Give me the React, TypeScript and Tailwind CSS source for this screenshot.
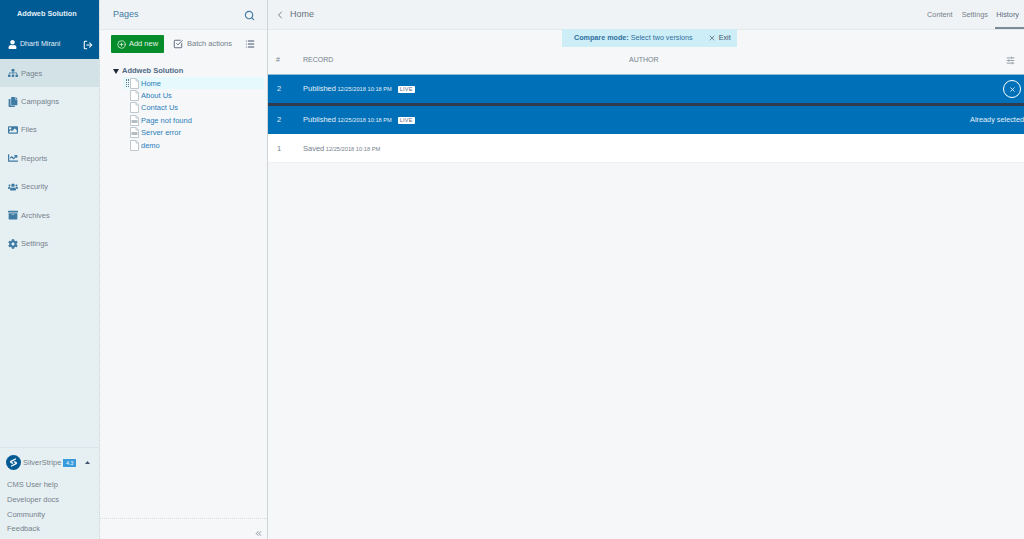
import { ChevronLeft, ChevronsLeft, CirclePlus, List, LogOut, Search, SlidersHorizontal, SquareCheckBig, X } from 'lucide-react';
import { FaArchive, FaChartLine, FaCog, FaCopy, FaImage, FaSitemap, FaUser, FaUsers } from 'react-icons/fa';

const NAV = [
  { label: 'Pages', icon: FaSitemap, active: true },
  { label: 'Campaigns', icon: FaCopy },
  { label: 'Files', icon: FaImage },
  { label: 'Reports', icon: FaChartLine },
  { label: 'Security', icon: FaUsers },
  { label: 'Archives', icon: FaArchive },
  { label: 'Settings', icon: FaCog },
];

const HELP = ['CMS User help', 'Developer docs', 'Community', 'Feedback'];

const TREE = [
  { label: 'Home', error: false, current: true },
  { label: 'About Us', error: false },
  { label: 'Contact Us', error: false },
  { label: 'Page not found', error: true },
  { label: 'Server error', error: true },
  { label: 'demo', error: false },
];

function DocIcon({ error }: { error?: boolean }) {
  return (
    <svg width="9" height="11" viewBox="0 0 9 11" className="shrink-0">
      <path d="M.5.5h5.5l2.5 2.5v7.5h-8z" fill="#fff" stroke="#c0c8cd" />
      <path d="M6 .5v2.5h2.5" fill="none" stroke="#c0c8cd" />
      {error && <rect x="1.5" y="5" width="6" height="3" fill="#b4bdc3" />}
    </svg>
  );
}

function LiveBadge() {
  return (
    <span className="ml-[6px] rounded-[1px] bg-white px-[2px] text-[5.5px] leading-[7px] tracking-[0.2px] text-[#5b6b82]">
      LIVE
    </span>
  );
}

function SelectedRow({ right }: { right: React.ReactNode }) {
  return (
    <div className="flex h-[28px] items-center bg-[#0071b8] text-[#e3eff7]">
      <span className="w-[35px] pl-[9px] text-[7.5px]">2</span>
      <span className="text-[7.5px]">Published</span>
      <span className="ml-[1.5px] text-[5.7px]">12/25/2018 10:18 PM</span>
      <LiveBadge />
      <div className="ml-auto flex items-center">{right}</div>
    </div>
  );
}

export default function App() {
  return (
    <div className="flex h-[539px] w-[1024px] overflow-hidden bg-[#f5f7f9] font-['Liberation_Sans',Arial,sans-serif] text-[#43536d]">
      {/* Menu */}
      <aside className="flex w-[100px] shrink-0 flex-col border-r border-dotted border-[#ced5d7] bg-[#e6f0f3]">
        <div className="h-[59px] bg-[#005b94] text-[#e3eff7]">
          <div className="flex h-[28px] items-center pl-[17px] text-[7.3px] font-bold">Addweb Solution</div>
          <div className="flex h-[31px] items-center pl-[8px] pr-[6px] pt-[2px]">
            <FaUser size={9} className="text-white" />
            <span className="ml-[3px] text-[7.1px]">Dharti Mirani</span>
            <LogOut size={10} strokeWidth={2.5} className="ml-auto text-white" />
          </div>
        </div>
        <nav>
          {NAV.map(({ label, icon: Icon, active }) => (
            <div key={label} className={`flex h-[28.4px] items-center pl-[7px] ${active ? 'bg-[#d3e2e7]' : ''}`}>
              <span className="flex w-[14px] justify-center pr-[2px] text-[#3f7ba3]">
                <Icon size={10} />
              </span>
              <span className="text-[7.5px] text-[#76828c]">{label}</span>
            </div>
          ))}
        </nav>
        <div className="mt-auto h-[92px] border-t border-dotted border-[#d3dce0]">
          <div className="flex h-[29px] items-center pl-[6px] pr-[9px]">
            <svg width="15" height="15" viewBox="0 0 15 15" className="shrink-0">
              <circle cx="7.5" cy="7.5" r="7.5" fill="#005b94" />
              <path d="M9.5 4 L5 6.3 Q4.2 7 5.2 7.6 L6.6 8.2 M5.5 11 L10 8.7 Q10.8 8 9.8 7.4 L8.4 6.8" fill="none" stroke="#fff" strokeWidth="1.3" strokeLinecap="round" />
            </svg>
            <span className="ml-[2px] text-[7.5px] text-[#76828c]">SilverStripe</span>
            <span className="ml-[2px] bg-[#3a9bdc] px-[3px] text-[5px] leading-[8px] text-white">4.3</span>
            <svg width="5" height="3" viewBox="0 0 5 3" className="ml-auto">
              <path d="M0 3 2.5 0 5 3z" fill="#43536d" />
            </svg>
          </div>
          <div className="flex flex-col pl-[7px] pt-[1px] text-[7.5px] leading-[14.8px] text-[#76828c]">
            {HELP.map((item) => (
              <span key={item}>{item}</span>
            ))}
          </div>
        </div>
      </aside>

      {/* Tree panel */}
      <section className="flex w-[168px] shrink-0 flex-col border-r border-[#ced5d7] bg-[#f5f7f9]">
        <div className="flex h-[30px] items-center justify-between border-b border-[#e4e8ea] bg-[#f0f3f5] pl-[13px] pr-[12px] pt-[1px]">
          <span className="text-[9px] text-[#3f7ba3]">Pages</span>
          <Search size={11} strokeWidth={2.5} className="text-[#3f7ba3]" />
        </div>
        <div className="flex items-center pl-[11px] pt-[5px]">
          <div className="flex h-[18px] w-[53px] items-center justify-center rounded-[1px] bg-[#078c2c] text-[#e3f3e7]">
            <CirclePlus size={9} />
            <span className="ml-[3px] text-[7.5px]">Add new</span>
          </div>
          <SquareCheckBig size={10} className="ml-[9px] text-[#43536d]" />
          <span className="ml-[4px] text-[7.5px] text-[#76828c]">Batch actions</span>
          <List size={10} strokeWidth={2.5} className="ml-[13px] text-[#43536d]" />
        </div>
        <div className="pl-[13px] pt-[12px]">
          <div className="flex h-[12px] items-center text-[7.5px] font-bold text-[#4f6a85]">
            <svg width="6" height="5" viewBox="0 0 6 5">
              <path d="M0 0h6L3 5z" fill="#1f2a36" />
            </svg>
            <span className="ml-[3px]">Addweb Solution</span>
          </div>
          <div className="mr-[3px] ml-[10px]">
            {TREE.map((page) => (
              <div key={page.label} className={`relative flex h-[12.4px] items-center pl-[7px] ${page.current ? 'bg-[#e6f9fc]' : ''}`}>
                {page.current && <span className="absolute left-[3px] top-[2px] h-[8px] w-[3px] border-x border-dotted border-[#6f7c86]" />}
                <DocIcon error={page.error} />
                <span className="ml-[2px] text-[7.5px] text-[#2b80b9]">{page.label}</span>
              </div>
            ))}
          </div>
        </div>
        <div className="mt-auto flex h-[21px] items-center justify-end border-t border-dotted border-[#d3dce0] pr-[4px]">
          <ChevronsLeft size={9} className="mt-[8px] text-[#66727d]" />
        </div>
      </section>

      {/* History */}
      <main className="relative flex min-w-0 flex-1 flex-col">
        <header className="flex h-[30px] items-center border-b border-[#e4e8ea] bg-[#f0f3f5]">
          <ChevronLeft size={12} className="ml-[6px] text-[#76828c]" />
          <span className="ml-[4px] pt-[1px] text-[9px] text-[#66727d]">Home</span>
          <div className="ml-auto flex h-full items-start text-[7.3px] text-[#76828c]">
            <span className="mr-[9px] pt-[10px]">Content</span>
            <span className="mr-[7px] pt-[10px]">Settings</span>
            <span className="h-full w-[29px] border-b-[2px] border-[#7c8a96] pt-[10px] pr-[5px] text-right text-[#5b6b82]">History</span>
          </div>
        </header>

        <div className="absolute left-[294px] top-[29px] flex h-[18px] w-[175px] items-center bg-[#cdeef7] pl-[12px] text-[7.2px] text-[#2f6f9e]">
          <span className="font-bold">Compare mode:</span>
          <span className="ml-[2px]">Select two versions</span>
          <X size={8} className="ml-[15px] text-[#43536d]" />
          <span className="ml-[3px] text-[#43536d]">Exit</span>
        </div>

        <div className="flex h-[44px] items-center pt-[17px] text-[7px] text-[#76828c]">
          <span className="w-[35px] pl-[8px]">#</span>
          <span className="w-[326px]">RECORD</span>
          <span>AUTHOR</span>
          <SlidersHorizontal size={9} className="ml-auto mr-[9px]" />
        </div>
        <div className="h-[1px] bg-[#8fb9d6]" />
        <SelectedRow
          right={
            <span className="mr-[3px] flex h-[18px] w-[18px] items-center justify-center rounded-full border border-white">
              <X size={7} strokeWidth={3} />
            </span>
          }
        />
        <div className="h-[3px] bg-[#303b4d]" />
        <SelectedRow right={<span className="text-[7.3px]">Already selected</span>} />
        <div className="flex h-[29px] items-center border-b border-[#eef0f2] bg-white pt-[2px] text-[#76828c]">
          <span className="w-[35px] pl-[9px] text-[7.5px]">1</span>
          <span className="text-[7.5px]">Saved</span>
          <span className="ml-[1.5px] text-[5.7px]">12/25/2018 10:18 PM</span>
        </div>
      </main>
    </div>
  );
}
